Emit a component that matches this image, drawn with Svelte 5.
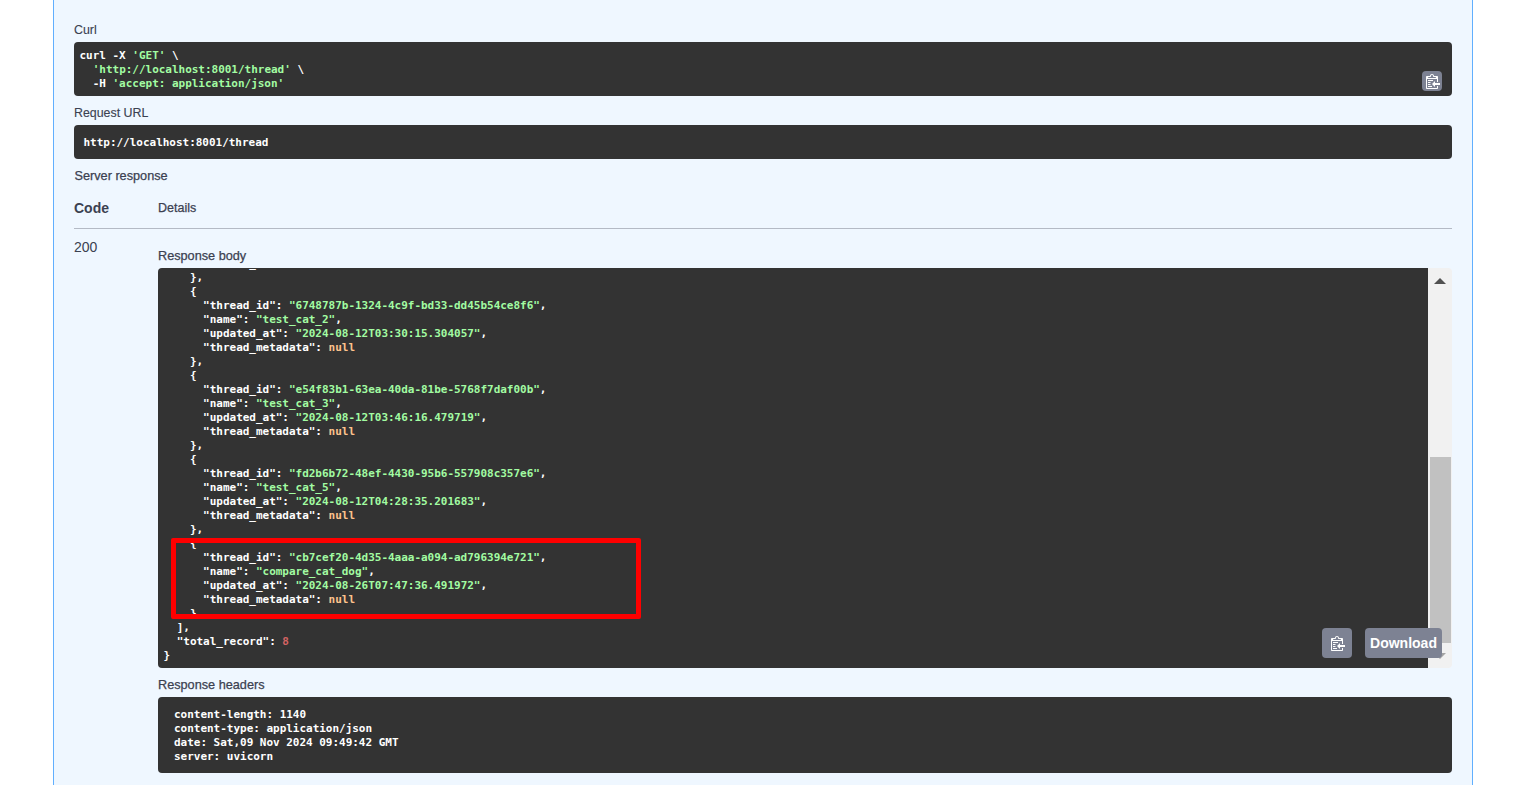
<script>
  const threads = [
    { id: '6748787b-1324-4c9f-bd33-dd45b54ce8f6', name: 'test_cat_2', at: '2024-08-12T03:30:15.304057' },
    { id: 'e54f83b1-63ea-40da-81be-5768f7daf00b', name: 'test_cat_3', at: '2024-08-12T03:46:16.479719' },
    { id: 'fd2b6b72-48ef-4430-95b6-557908c357e6', name: 'test_cat_5', at: '2024-08-12T04:28:35.201683' },
    { id: 'cb7cef20-4d35-4aaa-a094-ad796394e721', name: 'compare_cat_dog', at: '2024-08-26T07:47:36.491972' }
  ];

  const clip = 'M2 13h4v1H2v-1zm5-6H2v1h5V7zm2 3V8l-3 3 3 3v-2h5v-2H9zM4.5 9H2v1h2.5V9zM2 12h2.5v-1H2v1zm9 1h1v2c-.02.28-.11.52-.3.7-.19.18-.42.28-.7.3H1c-.55 0-1-.45-1-1V4c0-.55.45-1 1-1h3c0-1.11.89-2 2-2 1.11 0 2 .89 2 2h3c.55 0 1 .45 1 1v5h-1V6H1v9h10v-2zM2 5h8c0-.55-.45-1-1-1H8c-.55 0-1-.45-1-1s-.45-1-1-1-1 .45-1 1-.45 1-1 1H3c-.55 0-1 .45-1 1z';
</script>

<div class="panel">
  <h5 class="curl-title">Curl</h5>
  <div class="code curl">
<pre>curl -X <span class="str">'GET'</span> \
  <span class="str">'http://localhost:8001/thread'</span> \
  -H <span class="str">'accept: application/json'</span></pre>
    <button class="copy small" aria-label="Copy">
      <svg width="14" height="16" viewBox="0 0 14 16"><path fill="#fff" d={clip} /></svg>
    </button>
  </div>

  <h5 class="url-title">Request URL</h5>
  <div class="code url"><pre>http://localhost:8001/thread</pre></div>

  <h5 class="server-title">Server response</h5>

  <div class="head">
    <div class="col-code">Code</div>
    <div class="col-details">Details</div>
  </div>

  <div class="row">
    <div class="status">200</div>
    <div class="details">
      <h5 class="body-title">Response body</h5>
      <div class="body">
        <div class="scroll">
<pre class="body-pre">      "thread_metadata": <span class="lit">null</span>
    &#125;,
{#each threads as t, i}    &#123;
      "thread_id": <span class="str">"{t.id}"</span>,
      "name": <span class="str">"{t.name}"</span>,
      "updated_at": <span class="str">"{t.at}"</span>,
      "thread_metadata": <span class="lit">null</span>
    &#125;{i < threads.length - 1 ? ',' : ''}
{/each}  ],
  "total_record": <span class="num">8</span>
&#125;</pre>
        </div>
        <div class="scrollbar">
          <div class="arrow-up"></div>
          <div class="thumb"></div>
          <div class="arrow-down"></div>
        </div>
        <div class="highlight"></div>
        <div class="actions">
          <button class="copy big" aria-label="Copy">
            <svg width="14" height="16" viewBox="0 0 14 16"><path fill="#fff" d={clip} /></svg>
          </button>
          <button class="download">Download</button>
        </div>
      </div>

      <h5 class="headers-title">Response headers</h5>
      <div class="code headers">
<pre>content-length: 1140
content-type: application/json
date: Sat,09 Nov 2024 09:49:42 GMT
server: uvicorn</pre>
      </div>
    </div>
  </div>
</div>

<style>
  :global(body) {
    background: #fff;
    overflow: hidden;
  }

  .panel {
    box-sizing: border-box;
    width: 1420px;
    height: 785px;
    margin-left: 53px;
    padding: 0 20px;
    background: #eff7ff;
    border-left: 1px solid #61affe;
    border-right: 1px solid #61affe;
    font-family: "Liberation Sans", Arial, sans-serif;
    color: #3b4151;
    overflow: hidden;
  }

  h5 {
    margin: 0;
    font-size: 12.7px;
    line-height: 14px;
    font-weight: 400;
    -webkit-text-stroke: 0.25px #3b4151;
  }

  .curl-title { padding-top: 23px; margin-bottom: 5px; font-size: 12.4px; -webkit-text-stroke: 0.12px #3b4151; }
  .url-title { margin-top: 10px; margin-bottom: 5px; font-size: 12.4px; -webkit-text-stroke: 0.12px #3b4151; }
  .server-title { margin-top: 10px; padding-left: 0.5px; }

  pre {
    margin: 0;
    font-family: "DejaVu Sans Mono", monospace;
    font-size: 11px;
    letter-spacing: -0.02px;
    line-height: 14px;
    font-weight: 700;
    color: #fff;
    white-space: pre;
  }

  .str { color: #a2fca2; }
  .lit { color: #fcc28c; }
  .num { color: #d36363; }

  .code {
    position: relative;
    background: #333;
    border-radius: 4px;
  }

  .curl { padding: 7px 6px 5px 5.5px; height: 42px; }
  .url { padding: 11px 10px 9px 9.5px; height: 14px; }
  .headers { padding: 11px 16px 9px; height: 56px; }

  .copy {
    display: flex;
    align-items: center;
    justify-content: center;
    padding: 0 0 0 2px;
    border: none;
    border-radius: 4px;
    background: #7d8293;
  }

  .copy.small {
    position: absolute;
    right: 10px;
    bottom: 5px;
    width: 20px;
    height: 20px;
  }

  .copy.big {
    width: 30px;
    height: 30px;
  }

  .head {
    display: flex;
    box-sizing: border-box;
    height: 46px;
    padding-top: 12px;
    padding-bottom: 8px;
    align-items: center;
    border-bottom: 1px solid #b4bac5;
  }

  .col-code {
    width: 84px;
    font-size: 14px;
    font-weight: 700;
  }

  .col-details {
    font-size: 12.5px;
    -webkit-text-stroke: 0.25px #3b4151;
  }

  .row {
    display: flex;
  }

  .status {
    width: 84px;
    padding-top: 10px;
    font-size: 14px;
    line-height: 16px;
  }

  .details {
    flex: 1;
    min-width: 0;
  }

  .body-title { padding-top: 20px; margin-bottom: 5px; }

  .body {
    position: relative;
    display: flex;
    height: 400px;
    border-radius: 4px;
    overflow: hidden;
  }

  .scroll {
    flex: 1;
    background: #333;
    overflow: hidden;
  }

  .body-pre {
    margin: -11px 0 0 5.5px;
  }

  .scrollbar {
    position: relative;
    box-sizing: border-box;
    width: 24px;
    padding: 189px 2px 0;
    background: #f1f1f1;
  }

  .arrow-up,
  .arrow-down {
    position: absolute;
    left: 6px;
    width: 0;
    height: 0;
    border-left: 6px solid transparent;
    border-right: 6px solid transparent;
  }

  .arrow-up {
    top: 10px;
    border-bottom: 6px solid #505050;
  }

  .arrow-down {
    bottom: 9px;
    border-top: 6px solid #a3a3a3;
  }

  .thumb {
    width: 21px;
    height: 186px;
    background: #c1c1c1;
  }

  .highlight {
    position: absolute;
    box-sizing: border-box;
    left: 13px;
    top: 270px;
    width: 470px;
    height: 81px;
    border: 5px solid #f00;
    border-radius: 2px;
  }

  .actions {
    position: absolute;
    right: 10px;
    bottom: 10px;
    display: flex;
    gap: 13px;
  }

  .download {
    width: 77px;
    height: 30px;
    padding: 0;
    border: none;
    border-radius: 4px;
    background: #7d8293;
    color: #fff;
    font-family: "Liberation Sans", Arial, sans-serif;
    font-size: 14px;
    font-weight: 700;
  }

  .headers-title { margin-top: 10px; margin-bottom: 5px; }
</style>
